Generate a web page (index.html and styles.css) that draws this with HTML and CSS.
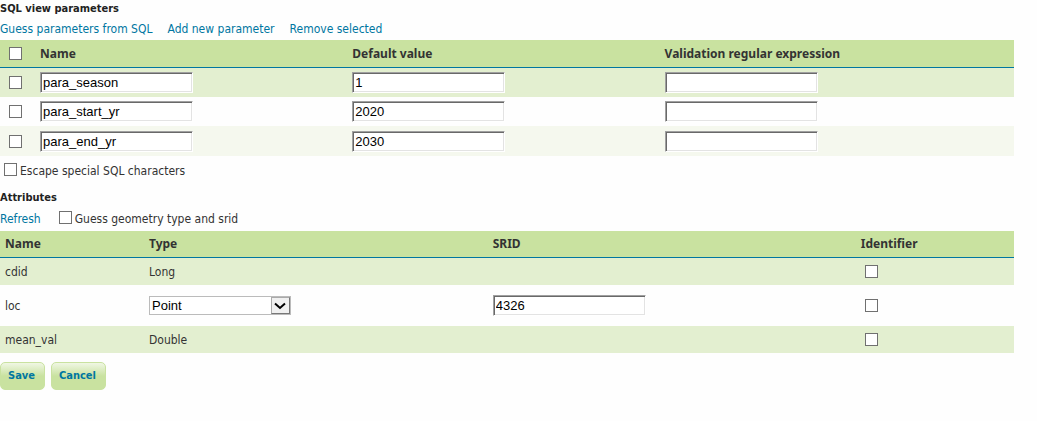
FILE: index.html
```html
<!DOCTYPE html>
<html lang="en">
<head>
<meta charset="utf-8">
<title>SQL view</title>
<link rel="stylesheet" href="styles.css">
</head>
<body>
<form class="page">
  <section>
    <h2 class="title">SQL view parameters</h2>
    <div class="links">
      <a href="#guess">Guess parameters from SQL</a>
      <a href="#add">Add new parameter</a>
      <a href="#remove">Remove selected</a>
    </div>
    <table class="grid params">
      <colgroup><col class="col-check"><col class="col-name"><col class="col-default"><col></colgroup>
      <thead>
        <tr><th class="pick"><input type="checkbox" class="box" aria-label="Select all"></th><th>Name</th><th>Default value</th><th>Validation regular expression</th></tr>
      </thead>
      <tbody>
        <tr class="green">
          <td class="pick"><input type="checkbox" class="box" aria-label="Select para_season"></td>
          <td><input type="text" class="field" aria-label="Name" value="para_season"></td>
          <td><input type="text" class="field" aria-label="Default value" value="1"></td>
          <td><input type="text" class="field" aria-label="Validation regular expression"></td>
        </tr>
        <tr>
          <td class="pick"><input type="checkbox" class="box" aria-label="Select para_start_yr"></td>
          <td><input type="text" class="field" aria-label="Name" value="para_start_yr"></td>
          <td><input type="text" class="field" aria-label="Default value" value="2020"></td>
          <td><input type="text" class="field" aria-label="Validation regular expression"></td>
        </tr>
        <tr class="pale">
          <td class="pick"><input type="checkbox" class="box" aria-label="Select para_end_yr"></td>
          <td><input type="text" class="field" aria-label="Name" value="para_end_yr"></td>
          <td><input type="text" class="field" aria-label="Default value" value="2030"></td>
          <td><input type="text" class="field" aria-label="Validation regular expression"></td>
        </tr>
      </tbody>
    </table>
    <div class="option escape">
      <input type="checkbox" class="box" id="escape"><label for="escape">Escape special SQL characters</label>
    </div>
  </section>
  <section>
    <h2 class="title">Attributes</h2>
    <div class="links refresh">
      <a href="#refresh">Refresh</a>
      <div class="option">
        <input type="checkbox" class="box" id="geometry"><label for="geometry">Guess geometry type and srid</label>
      </div>
    </div>
    <table class="grid attributes">
      <colgroup><col class="col-attribute"><col class="col-type"><col class="col-srid"><col></colgroup>
      <thead>
        <tr><th>Name</th><th>Type</th><th>SRID</th><th>Identifier</th></tr>
      </thead>
      <tbody>
        <tr class="green"><td>cdid</td><td>Long</td><td></td><td class="identifier"><input type="checkbox" class="box" aria-label="cdid is identifier"></td></tr>
        <tr class="tall">
          <td>loc</td>
          <td>
            <div class="picker">
              <select class="select" aria-label="Type"><option>Point</option></select>
              <span class="arrow"><svg width="12" height="8" viewBox="0 0 12 8" aria-hidden="true"><path d="M1 1.500 6 6l5-4.500" fill="none" stroke="#000" stroke-width="2"/></svg></span>
            </div>
          </td>
          <td><input type="text" class="field" aria-label="SRID" value="4326"></td>
          <td class="identifier"><input type="checkbox" class="box" aria-label="loc is identifier"></td>
        </tr>
        <tr class="green"><td>mean_val</td><td>Double</td><td></td><td class="identifier"><input type="checkbox" class="box" aria-label="mean_val is identifier"></td></tr>
      </tbody>
    </table>
  </section>
  <div class="actions">
    <button type="submit" class="button">Save</button>
    <button type="button" class="button">Cancel</button>
  </div>
</form>
</body>
</html>
```
FILE: styles.css
```css
* {
  box-sizing: border-box;
}

body {
  margin: 0;
  background: #fefefe;
  color: #333;
  font: 12px/18px "DejaVu Sans Condensed", "Noto Sans", sans-serif;
}

.page {
  margin-right: 23px;
}

.title {
  margin: 0;
  color: #222;
  font-size: 11px;
  line-height: 18px;
}

.links {
  display: flex;
  align-items: center;
  gap: 15px;
  height: 22px;
}

.refresh {
  gap: 18px;
  height: 24px;
}

.links a {
  color: #0076a1;
  text-decoration: none;
}

.grid {
  width: 100%;
  table-layout: fixed;
  border-collapse: separate;
  border-spacing: 0;
}

.grid th,
.grid td {
  padding: 0 5px;
  text-align: left;
  vertical-align: middle;
}

.grid th {
  height: 27px;
  background: #c9e2a0;
  border-bottom: 1px solid #0076a1;
  font-family: "Noto Sans", "Open Sans", sans-serif;
}

.params th {
  height: 28px;
}

.params td {
  height: 29px;
}

.params .pale td {
  height: 30px;
}

.attributes td {
  height: 27px;
}

.attributes .tall td {
  height: 41px;
}

.grid .pick,
.grid .identifier {
  padding-left: 9px;
}

.green {
  background: #e3efd0;
}

.pale {
  background: #f5f8ee;
}

.col-check {
  width: 35px;
}

.col-name,
.col-default {
  width: 30.8%;
}

.col-attribute {
  width: 14.2%;
}

.col-type {
  width: 33.9%;
}

.col-srid {
  width: 36.3%;
}

.box {
  display: block;
  flex: none;
  appearance: none;
  width: 13px;
  height: 13px;
  margin: 0;
  border: 1px solid #707070;
  background: #fff;
}

.box:checked {
  background: #0076a1;
}

.field {
  display: block;
  width: 153px;
  height: 21px;
  padding: 0 2px;
  border: 1px solid;
  border-color: #a0a0a0 #fff #fff #a0a0a0;
  box-shadow: inset 1px 1px #696969, inset -1px -1px #e3e3e3;
  background: #fff;
  color: #000;
  font: 13px/17px "Liberation Sans", Arial, sans-serif;
}

.option {
  display: flex;
  align-items: center;
  gap: 3px;
}

.option .box {
  margin-bottom: 3px;
}

.escape {
  padding: 6px 4px 9px;
}

.picker {
  display: grid;
  width: 142px;
  height: 19px;
  border: 1px solid #bbb;
  background: #fff;
}

.select,
.arrow {
  grid-area: 1 / 1;
}

.select {
  appearance: none;
  min-width: 0;
  padding: 0 20px 0 2px;
  border: 0;
  border-radius: 0;
  background: transparent;
  color: #000;
  font: 13px/17px "Liberation Sans", Arial, sans-serif;
}

.arrow {
  display: flex;
  align-items: center;
  justify-content: center;
  justify-self: end;
  width: 19px;
  border: 1px solid;
  border-color: #aaa #777 #777 #aaa;
  background: #f0f0f0;
  pointer-events: none;
}

.actions {
  display: flex;
  gap: 6px;
  padding: 9px 0;
}

.button {
  height: 28px;
  padding: 0 9px 0 7px;
  border: 1px solid #c9e2a0;
  border-radius: 5px;
  background: linear-gradient(#f0f7e4, #c9e2a0 50%);
  color: #0076a1;
  font: bold 11px/18px "DejaVu Sans Condensed", "Noto Sans", sans-serif;
}
```
